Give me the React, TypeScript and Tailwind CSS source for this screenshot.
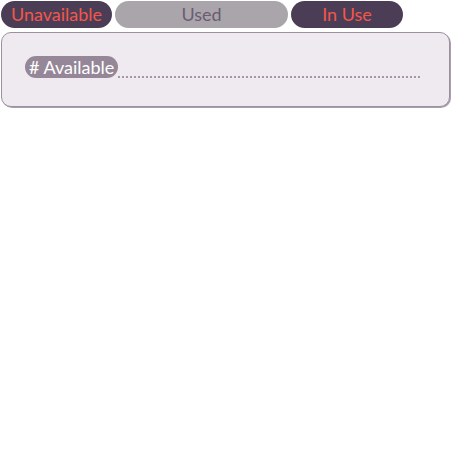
import React from "react";

export default function App() {
  const font = { fontFamily: "Lato, 'Noto Sans', sans-serif" };
  return (
    <div className="w-[451px] h-[451px] bg-white" style={font}>
      <div className="flex items-center gap-[3px] pl-[1px] pt-[1px]">
        <div className="w-[111px] h-[27px] pb-[2px] rounded-full bg-[#4b3d55] text-[#f2574b] text-[18px] flex items-center justify-center leading-none">
          Unavailable
        </div>
        <div className="w-[173px] h-[27px] pb-[2px] rounded-full bg-[#aaa5ab] text-[#6b5c73] text-[18px] flex items-center justify-center leading-none">
          Used
        </div>
        <div className="w-[112px] h-[27px] pb-[2px] rounded-full bg-[#4b3d55] text-[#f2574b] text-[18px] flex items-center justify-center leading-none">
          In Use
        </div>
      </div>
      <div className="mt-[4px] ml-[1px] w-[449px] h-[75px] rounded-[10px] border border-[#9c90a1] bg-[#efe9f0] shadow-[1px_1px_0_#a99fac] flex items-center pl-[23px] pr-[29px]">
        <div className="flex items-end flex-1 mb-[5px]">
          <div className="h-[22px] px-[4px] pb-[1px] rounded-full bg-[#958798] text-white text-[18px] flex items-center leading-none">
            # Available
          </div>
          <div className="flex-1 border-b-2 border-dotted border-[#a597a8]" />
        </div>
      </div>
    </div>
  );
}
